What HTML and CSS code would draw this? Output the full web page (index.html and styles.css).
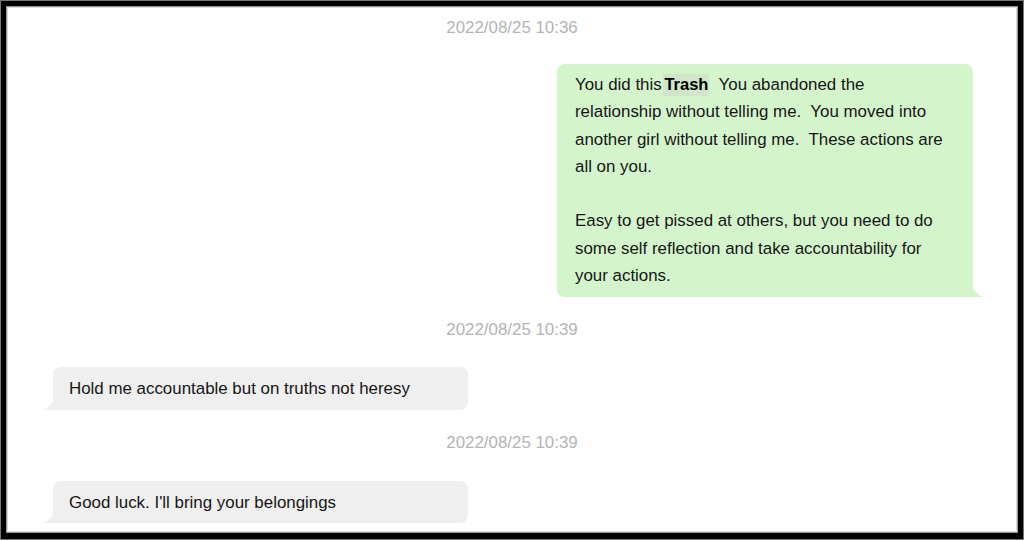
FILE: index.html
```html
<!DOCTYPE html>
<html>
<head>
<meta charset="utf-8">
<link rel="stylesheet" href="styles.css">
</head>
<body>
<div class="frame">
  <div class="stamp stamp-first">2022/08/25 10:36</div>
  <div class="row row-out">
    <div class="bubble out">You did this <span class="tag">Trash</span>&nbsp; You abandoned the<br>relationship without telling me.&nbsp; You moved into<br>another girl without telling me.&nbsp; These actions are<br>all on you.<br><br>Easy to get pissed at others, but you need to do<br>some self reflection and take accountability for<br>your actions.</div>
  </div>
  <div class="stamp stamp-mid">2022/08/25 10:39</div>
  <div class="row row-in">
    <div class="bubble in">Hold me accountable but on truths not heresy</div>
  </div>
  <div class="stamp stamp-mid2">2022/08/25 10:39</div>
  <div class="row row-in">
    <div class="bubble in">Good luck. I'll bring your belongings</div>
  </div>
</div>
</body>
</html>
```
FILE: styles.css
```css
html, body {
  margin: 0;
  padding: 0;
  background: #ffffff;
}
.frame {
  box-sizing: border-box;
  width: 1024px;
  height: 540px;
  border-style: solid;
  border-color: #000;
  border-width: 6px 6px 7px 6px;
  box-shadow: inset 0 0 0 1px #9a9a9a, inset 0 0 0 2px #dcdcdc;
  outline: 1px solid #777;
  outline-offset: -1px;
  background: #fff;
  font-family: "Liberation Sans", Arial, sans-serif;
  overflow: hidden;
  display: flex;
  flex-direction: column;
}
.stamp {
  height: 20px;
  line-height: 20px;
  text-align: center;
  font-size: 16.9px;
  color: #b4b4b4;
}
.stamp-first { margin-top: 12px; margin-bottom: 26px; }
.stamp-mid { margin-top: 23px; margin-bottom: 27px; }
.stamp-mid2 { margin-top: 23px; margin-bottom: 28px; }
.row {
  display: flex;
}
.row-out { justify-content: flex-end; padding-right: 45px; }
.row-in { justify-content: flex-start; padding-left: 47px; }
.bubble {
  position: relative;
  box-sizing: border-box;
  font-size: 16.9px;
  color: #161616;
  border-radius: 8px;
  white-space: nowrap;
}
.out {
  width: 416px;
  height: 233px;
  background: #d4f5cc;
  padding: 7px 10px 7px 18px;
  line-height: 27.3px;
  border-bottom-right-radius: 0;
}
.out::after {
  content: "";
  position: absolute;
  right: -10px;
  bottom: 0;
  width: 12px;
  height: 14px;
  background: #d4f5cc;
  clip-path: polygon(0 0, 20% 45%, 60% 80%, 100% 100%, 0 100%);
}
.tag {
  font-weight: bold;
  color: #000;
  background: #cfe6c9;
  padding: 1px 1px 3px 1px;
  font-size: 16.5px;
  margin-left: -3px;
}
.in {
  width: 415px;
  height: 43px;
  background: #efefef;
  padding: 8px 16px;
  line-height: 27px;
  border-bottom-left-radius: 0;
}
.row-in:last-child .in { height: 42px; }
.in::after {
  content: "";
  position: absolute;
  left: -10px;
  bottom: 0;
  width: 12px;
  height: 14px;
  background: #efefef;
  clip-path: polygon(100% 0, 80% 45%, 40% 80%, 0 100%, 100% 100%);
}
```
